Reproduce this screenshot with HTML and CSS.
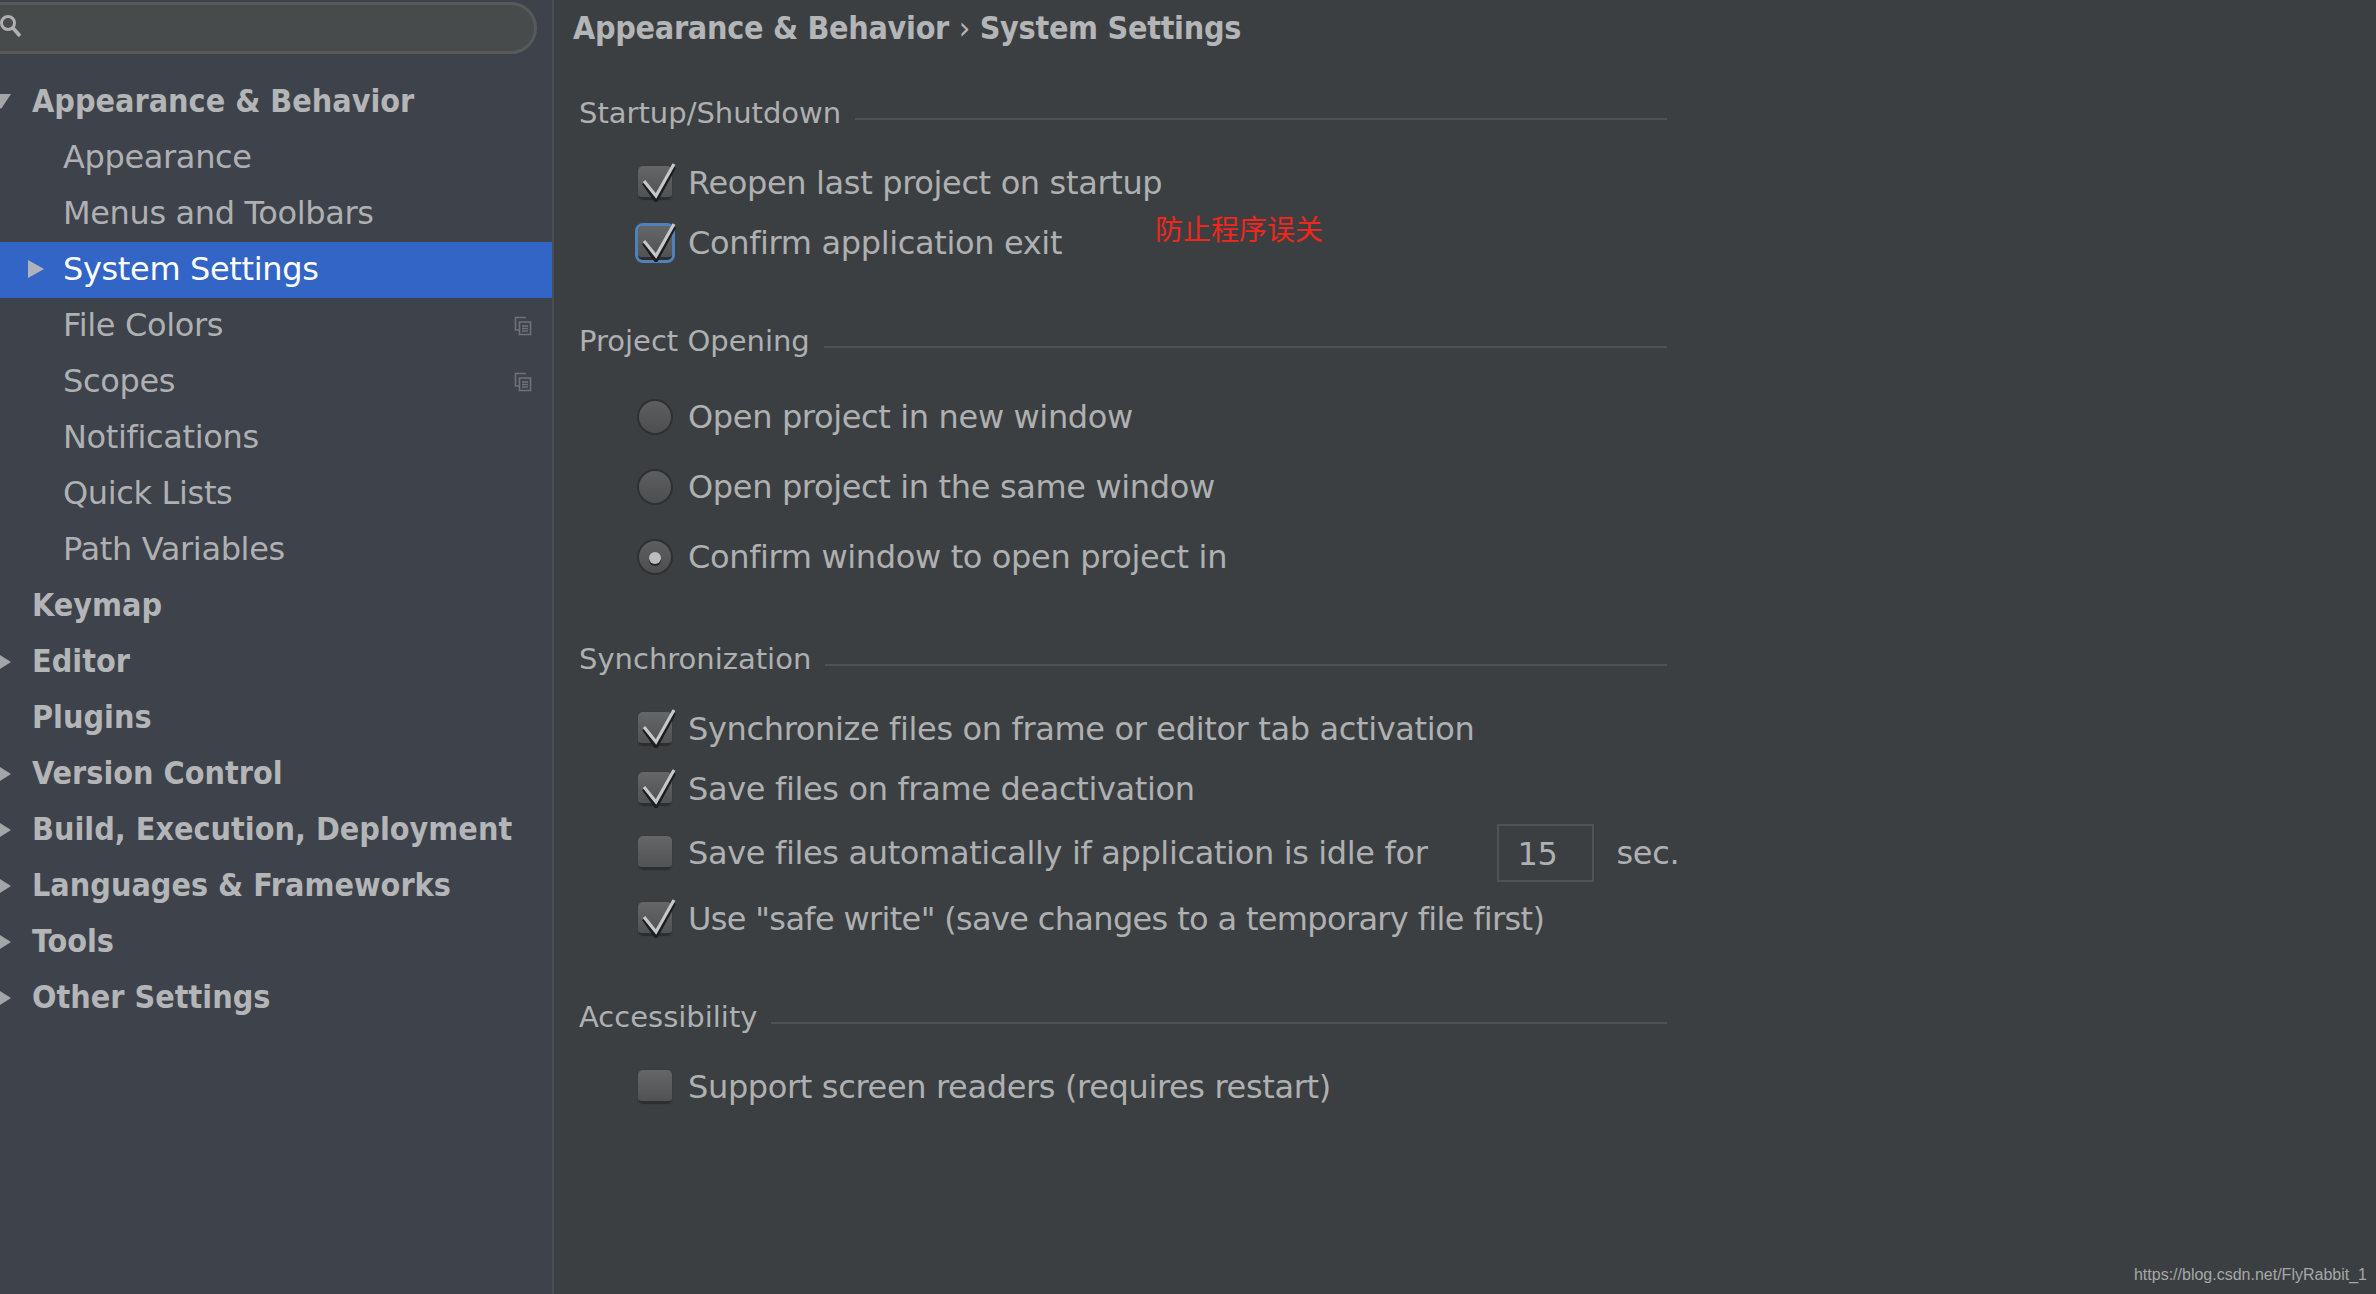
FILE: index.html
```html
<!DOCTYPE html>
<html lang="en">
<head>
  <meta charset="UTF-8">
  <title>System Settings</title>
  <link rel="stylesheet" href="styles.css">
</head>
<body>
<svg class="defs" width="0" height="0">
  <symbol id="check" viewBox="0 0 44 44">
    <path d="M9 24l12 17L39 8" fill="none" stroke="#1c1d1e" stroke-width="4.500" transform="translate(0 1)"/>
    <path d="M9 23l12 15L39 6" fill="none" stroke="#c6c7c8" stroke-width="3.200"/>
  </symbol>
  <symbol id="copy" viewBox="0 0 18 20">
    <path d="M12 1.500H1.500V14H5M5.500 6H16.500V18.500H5.500ZM8 10h6M8 12.500h6M8 15h6" fill="none" stroke="#6f7274" stroke-width="1.600"/>
  </symbol>
</svg>

<div class="window">
  <aside class="sidebar">
    <div class="search">
      <svg class="search-icon" width="24" height="26" viewBox="0 0 24 26"><circle cx="8" cy="9" r="6.500" fill="none" stroke="#aeb0b2" stroke-width="3"/><path d="M13 14l7 8" stroke="#aeb0b2" stroke-width="3.500"/></svg>
    </div>
    <ul class="tree">
      <li class="top"><span class="arrow down"></span>Appearance &amp; Behavior</li>
      <li class="sub">Appearance</li>
      <li class="sub">Menus and Toolbars</li>
      <li class="sub selected"><span class="arrow sub-arrow"></span>System Settings</li>
      <li class="sub">File Colors<svg class="copy"><use href="#copy"/></svg></li>
      <li class="sub">Scopes<svg class="copy"><use href="#copy"/></svg></li>
      <li class="sub">Notifications</li>
      <li class="sub">Quick Lists</li>
      <li class="sub">Path Variables</li>
      <li class="top">Keymap</li>
      <li class="top"><span class="arrow"></span>Editor</li>
      <li class="top">Plugins</li>
      <li class="top"><span class="arrow"></span>Version Control</li>
      <li class="top"><span class="arrow"></span>Build, Execution, Deployment</li>
      <li class="top"><span class="arrow"></span>Languages &amp; Frameworks</li>
      <li class="top"><span class="arrow"></span>Tools</li>
      <li class="top"><span class="arrow"></span>Other Settings</li>
    </ul>
  </aside>

  <main class="content">
    <h1 class="crumbs">Appearance &amp; Behavior <span class="sep">›</span> System Settings</h1>

    <section class="group first">
      <h2 class="group-title"><span>Startup/Shutdown</span></h2>
      <div class="row"><span class="box"><svg><use href="#check"/></svg></span>Reopen last project on startup</div>
      <div class="row"><span class="box focus"><svg><use href="#check"/></svg></span>Confirm application exit</div>
      <span class="note">防止程序误关</span>
    </section>

    <section class="group opening">
      <h2 class="group-title"><span>Project Opening</span></h2>
      <div class="row radio-row"><span class="radio"></span>Open project in new window</div>
      <div class="row radio-row"><span class="radio"></span>Open project in the same window</div>
      <div class="row radio-row"><span class="radio on"></span>Confirm window to open project in</div>
    </section>

    <section class="group sync">
      <h2 class="group-title"><span>Synchronization</span></h2>
      <div class="row"><span class="box"><svg><use href="#check"/></svg></span>Synchronize files on frame or editor tab activation</div>
      <div class="row"><span class="box"><svg><use href="#check"/></svg></span>Save files on frame deactivation</div>
      <div class="row idle-row"><span class="box"></span>Save files automatically if application is idle for<span class="field">15</span><span class="unit">sec.</span></div>
      <div class="row safe-row"><span class="box"><svg><use href="#check"/></svg></span>Use "safe write" (save changes to a temporary file first)</div>
    </section>

    <section class="group access">
      <h2 class="group-title"><span>Accessibility</span></h2>
      <div class="row"><span class="box"></span>Support screen readers (requires restart)</div>
    </section>
  </main>
</div>
<span class="watermark">https://blog.csdn.net/FlyRabbit_1</span>
</body>
</html>
```

FILE: styles.css
```css
*{box-sizing:border-box;}
html,body{margin:0;padding:0;height:100%;}
body{font-family:"DejaVu Sans","Noto Sans CJK SC",sans-serif;font-size:32px;letter-spacing:-.35px;color:#aeb0b1;background:#3c3f41;overflow:hidden;}
.defs{position:absolute;}
.window{display:flex;height:1294px;}

.sidebar{width:554px;flex:none;background:#3e424b;border-right:2px solid #4a4d50;}
.search{position:relative;height:52px;width:577px;margin:2px 0 20px -40px;background:#484b4c;border:3px solid #58595a;border-radius:26px;}
.search-icon{position:absolute;left:37px;top:9px;}
.tree{list-style:none;margin:0;padding:0;}
.tree li{position:relative;height:56px;line-height:54px;white-space:nowrap;}
.top{padding-left:32px;font-weight:bold;font-stretch:condensed;letter-spacing:0;color:#b3b5b7;}
.sub{padding-left:63px;}
.selected{background:#3265c5;color:#fff;width:552px;}
.arrow{position:absolute;left:0;top:21px;border-style:solid;border-width:7px 0 7px 11px;border-color:transparent transparent transparent #a3a5a7;}
.arrow.down{top:20px;left:-9px;border-width:15px 10px 0 10px;border-color:#a3a5a7 transparent transparent transparent;}
.arrow.sub-arrow{left:28px;top:18px;border-width:9px 0 9px 16px;border-color:transparent transparent transparent #b0b3b9;}
.copy{position:absolute;left:514px;top:18px;width:18px;height:20px;}

.content{flex:1;padding-left:19px;position:relative;}
.crumbs{margin:0;height:58px;font-size:32px;line-height:56px;font-weight:bold;font-stretch:condensed;letter-spacing:-.3px;color:#b3b5b7;}
.sep{font-weight:normal;}
.group{position:relative;width:1100px;padding-left:6px;}
.group.first{margin-top:35px;}
.group.opening{margin-top:47px;}
.group.sync{margin-top:47px;}
.group.access{margin-top:45px;}
.group-title{display:flex;align-items:center;margin:0 0 21px;height:40px;width:1088px;font-size:29px;font-weight:normal;letter-spacing:0;white-space:nowrap;}
.group-title::after{content:"";flex:1;height:2px;margin:12px 0 0 14px;background:#505152;}
.row{display:flex;align-items:center;height:60px;padding:0 0 2px 59px;white-space:nowrap;}
.radio-row{height:70px;padding:0 0 0 58px;}
.idle-row{height:68px;}
.safe-row{height:64px;letter-spacing:-.66px;}
.box{position:relative;flex:none;width:34px;height:34px;margin-right:16px;border-radius:5px;background:linear-gradient(#646668,#505254);border-bottom:3px solid #2d2e30;box-shadow:0 0 0 1px #3a3b3d;}
.box svg{position:absolute;left:-3px;top:-8px;width:44px;height:44px;}
.box.focus{box-shadow:0 0 0 3px #4f81ba;}
.radio{position:relative;flex:none;width:36px;height:36px;margin-right:15px;border-radius:50%;background:linear-gradient(#5c5e60,#4c4e50);border:2px solid #2f3032;}
.radio.on::after{content:"";position:absolute;left:10px;top:11px;width:12px;height:12px;border-radius:50%;background:#bcbdbe;box-shadow:0 2px 0 #242526;}
.field{flex:none;width:97px;height:58px;margin-left:70px;padding-left:18px;line-height:56px;border:2px solid #505253;}
.unit{margin-left:22px;}
.note{position:absolute;left:582px;top:117px;font-size:28px;line-height:36px;letter-spacing:0;color:#f3261c;font-family:"Noto Sans CJK SC",sans-serif;}
.watermark{position:absolute;right:9px;bottom:9px;font:16px/20px "Liberation Sans",sans-serif;letter-spacing:0;color:#a5a7a8;}
```
